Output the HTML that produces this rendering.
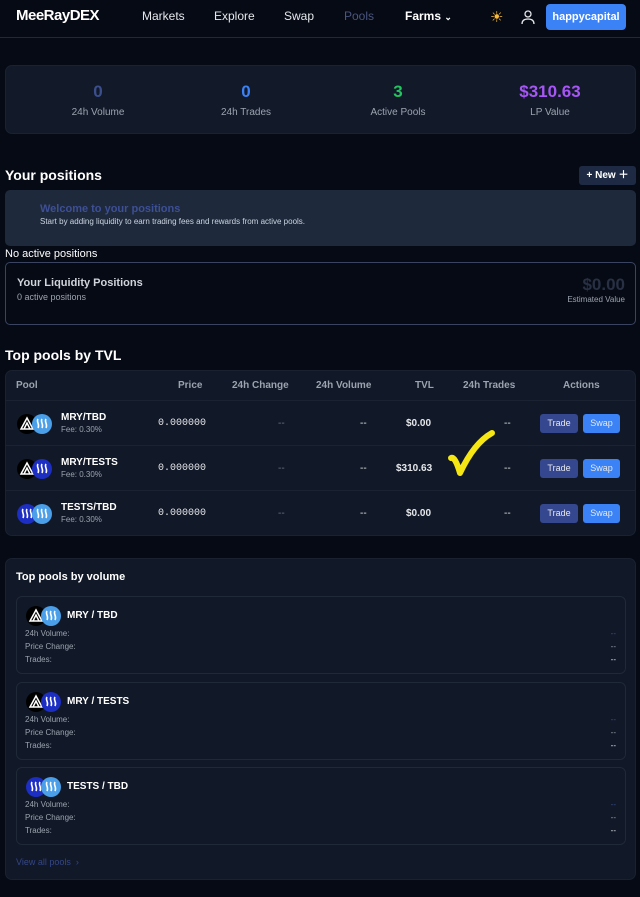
<!DOCTYPE html>
<html><head><meta charset="utf-8"><style>
*{margin:0;padding:0;box-sizing:border-box}
body{width:640px;height:897px;background:#060a14;font-family:"Liberation Sans",sans-serif;color:#e5e7eb;position:relative;overflow:hidden}
.a{position:absolute}
.nav a{position:absolute;top:9px;font-size:12px;color:#e5e7eb}
.card{background:#111827;border-radius:7px}
.stat{position:absolute;width:160px;text-align:center}
.stat b{display:block;font-size:17px;font-weight:bold}
.stat span{display:block;font-size:10px;color:#9ca3af;margin-top:5px}
.th{position:absolute;top:380px;font-size:10px;color:#9ca3af;font-weight:bold}
.row{position:absolute;left:5px;width:631px;height:45px;border-top:1px solid #1b2333}
.row .c{position:absolute;top:17px;font-size:10px}
.btn{position:absolute;top:13px;height:19px;border-radius:3px;font-size:9px;color:#e5e7eb;text-align:center;line-height:19px}
.sub{position:absolute;left:16px;width:610px;height:78px;border:1px solid #1f2937;border-radius:6px;background:#111827}
.sub .t{position:absolute;left:50px;top:13px;font-size:10px;font-weight:bold;color:#fff}
.sub .l{position:absolute;left:8px;font-size:8px;color:#9ca3af}
.sub .r{position:absolute;right:9px;font-size:8px;color:#9ca3af}
</style></head><body>
<svg width="0" height="0" style="position:absolute"><defs>
<g id="mry"><circle cx="10" cy="10" r="10" fill="#000"/><path d="M4 15 L10 4 L16 15 Z M7 15 L10 9 L13 15" fill="none" stroke="#fff" stroke-width="1.5"/></g>
<g id="stl"><circle cx="10" cy="10" r="10" fill="#4a9fe8"/><path d="M6 5c-2 3 2 5 0 9M10 5c-2 3 2 5 0 9M14 5c-2 3 2 5 0 9" fill="none" stroke="#fff" stroke-width="1.6"/></g>
<g id="std"><circle cx="10" cy="10" r="10" fill="#1d2ec2"/><path d="M6 5c-2 3 2 5 0 9M10 5c-2 3 2 5 0 9M14 5c-2 3 2 5 0 9" fill="none" stroke="#fff" stroke-width="1.6"/></g>
</defs></svg>

<div class="nav">
<div class="a" style="left:16px;top:7px;font-size:15px;font-weight:bold;color:#fff;letter-spacing:-0.5px">MeeRayDEX</div>
<a style="left:142px">Markets</a><a style="left:214px">Explore</a><a style="left:284px">Swap</a><a style="left:344px;color:#4b5580">Pools</a>
<a style="left:405px;font-weight:bold;color:#fff">Farms <span style="font-size:9px">⌄</span></a>
<div class="a" style="left:490px;top:8px;font-size:15px;color:#f6b93b">☀</div>
<svg class="a" style="left:520px;top:9px" width="16" height="16" viewBox="0 0 16 16"><circle cx="8" cy="5" r="3" fill="none" stroke="#e5e7eb" stroke-width="1.3"/><path d="M2 15c0-4 3-5 6-5s6 1 6 5" fill="none" stroke="#e5e7eb" stroke-width="1.3"/></svg>
<div class="a" style="left:546px;top:4px;width:80px;height:26px;background:#3b82f6;border-radius:4px;color:#fff;font-size:11px;font-weight:bold;text-align:center;line-height:26px">happycapital</div>
</div>
<div class="a" style="left:0;top:37px;width:640px;height:1px;background:#1f2937"></div>

<div class="a card" style="left:5px;top:65px;width:631px;height:69px;background:#121a2a;border:1px solid #1a2232">
<div class="stat" style="left:12px;top:16px"><b style="color:#3b4f8f">0</b><span>24h Volume</span></div>
<div class="stat" style="left:160px;top:16px"><b style="color:#3b82f6">0</b><span>24h Trades</span></div>
<div class="stat" style="left:312px;top:16px"><b style="color:#22c55e">3</b><span>Active Pools</span></div>
<div class="stat" style="left:464px;top:16px"><b style="color:#a855f7">$310.63</b><span>LP Value</span></div>
</div>

<div class="a" style="left:5px;top:167px;font-size:14px;font-weight:bold;color:#fff">Your positions</div>
<div class="a" style="left:579px;top:166px;width:57px;height:19px;background:#1e2a44;border-radius:3px;color:#fff;font-size:10px;font-weight:bold;text-align:center;line-height:19px">+ New ＋</div>
<div class="a" style="left:5px;top:190px;width:631px;height:56px;background:#1e293b;border-radius:5px">
<div class="a" style="left:35px;top:13px;font-size:11px;font-weight:bold;color:#3d4f95">Welcome to your positions</div>
<div class="a" style="left:35px;top:27px;font-size:8px;color:#cbd5e1">Start by adding liquidity to earn trading fees and rewards from active pools.</div>
</div>
<div class="a" style="left:5px;top:248px;font-size:11px;color:#fff">No active positions</div>
<div class="a" style="left:5px;top:262px;width:631px;height:63px;border:1px solid #3a4460;border-radius:5px">
<div class="a" style="left:11px;top:14px;font-size:11px;font-weight:bold;color:#d1d5db">Your Liquidity Positions</div>
<div class="a" style="left:11px;top:29px;font-size:9px;color:#9ca3af">0 active positions</div>
<div class="a" style="right:10px;top:12px;font-size:17px;font-weight:bold;color:#283044">$0.00</div>
<div class="a" style="right:10px;top:32px;font-size:8px;color:#9ca3af">Estimated Value</div>
</div>

<div class="a" style="left:5px;top:347px;font-size:14px;font-weight:bold;color:#fff">Top pools by TVL</div>
<div class="a card" style="left:5px;top:370px;width:631px;height:166px;border:1px solid #1a2232"></div>
<div class="th" style="left:16px">Pool</div><div class="th" style="left:178px">Price</div><div class="th" style="left:232px">24h Change</div><div class="th" style="left:316px">24h Volume</div><div class="th" style="left:415px">TVL</div><div class="th" style="left:463px">24h Trades</div><div class="th" style="left:563px">Actions</div>

<div class="row" style="top:400px">
<svg class="a" style="left:11px;top:12px" width="40" height="22" viewBox="0 0 40 22"><use href="#mry" x="1" y="1"/><use href="#stl" x="16" y="1"/></svg>
<div class="a" style="left:56px;top:11px;font-size:10px;font-weight:bold;color:#fff">MRY/TBD</div><div class="a" style="left:56px;top:24px;font-size:8px;color:#9ca3af">Fee: 0.30%</div>
<div class="c" style="left:153px;font-family:'Liberation Mono',monospace">0.000000</div><div class="c" style="left:273px;color:#6b7280">--</div><div class="c" style="left:355px">--</div><div class="c" style="left:401px;font-weight:bold">$0.00</div><div class="c" style="left:499px">--</div>
<div class="btn" style="left:535px;width:38px;background:#35478f">Trade</div><div class="btn" style="left:578px;width:37px;background:#3b82f6">Swap</div></div>
<div class="row" style="top:445px">
<svg class="a" style="left:11px;top:12px" width="40" height="22" viewBox="0 0 40 22"><use href="#mry" x="1" y="1"/><use href="#std" x="16" y="1"/></svg>
<div class="a" style="left:56px;top:11px;font-size:10px;font-weight:bold;color:#fff">MRY/TESTS</div><div class="a" style="left:56px;top:24px;font-size:8px;color:#9ca3af">Fee: 0.30%</div>
<div class="c" style="left:153px;font-family:'Liberation Mono',monospace">0.000000</div><div class="c" style="left:273px;color:#6b7280">--</div><div class="c" style="left:355px">--</div><div class="c" style="left:391px;font-weight:bold">$310.63</div><div class="c" style="left:499px">--</div>
<div class="btn" style="left:535px;width:38px;background:#35478f">Trade</div><div class="btn" style="left:578px;width:37px;background:#3b82f6">Swap</div></div>
<div class="row" style="top:490px">
<svg class="a" style="left:11px;top:12px" width="40" height="22" viewBox="0 0 40 22"><use href="#std" x="1" y="1"/><use href="#stl" x="16" y="1"/></svg>
<div class="a" style="left:56px;top:11px;font-size:10px;font-weight:bold;color:#fff">TESTS/TBD</div><div class="a" style="left:56px;top:24px;font-size:8px;color:#9ca3af">Fee: 0.30%</div>
<div class="c" style="left:153px;font-family:'Liberation Mono',monospace">0.000000</div><div class="c" style="left:273px;color:#6b7280">--</div><div class="c" style="left:355px">--</div><div class="c" style="left:401px;font-weight:bold">$0.00</div><div class="c" style="left:499px">--</div>
<div class="btn" style="left:535px;width:38px;background:#35478f">Trade</div><div class="btn" style="left:578px;width:37px;background:#3b82f6">Swap</div></div>
<svg class="a" style="left:444px;top:428px" width="54" height="52" viewBox="0 0 54 52"><path d="M7 30 Q11 28 16 45 Q30 15 48 5" fill="none" stroke="#f5e614" stroke-width="6" stroke-linecap="round" stroke-linejoin="round"/></svg>

<div class="a card" style="left:5px;top:558px;width:631px;height:322px;border:1px solid #1a2232"></div>
<div class="a" style="left:16px;top:571px;font-size:11px;font-weight:bold;color:#fff">Top pools by volume</div>
<div class="sub" style="top:596px"><svg class="a" style="left:8px;top:8px" width="40" height="22" viewBox="0 0 40 22"><use href="#mry" x="1" y="1"/><use href="#stl" x="16" y="1"/></svg><div class="t">MRY / TBD</div>
<div class="l" style="top:32px">24h Volume:</div><div class="l" style="top:45px">Price Change:</div><div class="l" style="top:58px">Trades:</div>
<div class="r" style="top:32px;color:#3b4f8f">--</div><div class="r" style="top:45px">--</div><div class="r" style="top:58px;color:#e5e7eb">--</div></div>
<div class="sub" style="top:682px"><svg class="a" style="left:8px;top:8px" width="40" height="22" viewBox="0 0 40 22"><use href="#mry" x="1" y="1"/><use href="#std" x="16" y="1"/></svg><div class="t">MRY / TESTS</div>
<div class="l" style="top:32px">24h Volume:</div><div class="l" style="top:45px">Price Change:</div><div class="l" style="top:58px">Trades:</div>
<div class="r" style="top:32px;color:#3b4f8f">--</div><div class="r" style="top:45px">--</div><div class="r" style="top:58px;color:#e5e7eb">--</div></div>
<div class="sub" style="top:767px"><svg class="a" style="left:8px;top:8px" width="40" height="22" viewBox="0 0 40 22"><use href="#std" x="1" y="1"/><use href="#stl" x="16" y="1"/></svg><div class="t">TESTS / TBD</div>
<div class="l" style="top:32px">24h Volume:</div><div class="l" style="top:45px">Price Change:</div><div class="l" style="top:58px">Trades:</div>
<div class="r" style="top:32px;color:#3b4f8f">--</div><div class="r" style="top:45px">--</div><div class="r" style="top:58px;color:#e5e7eb">--</div></div>
<div class="a" style="left:16px;top:857px;font-size:9px;color:#34468a">View all pools &nbsp;›</div>
</body></html>
